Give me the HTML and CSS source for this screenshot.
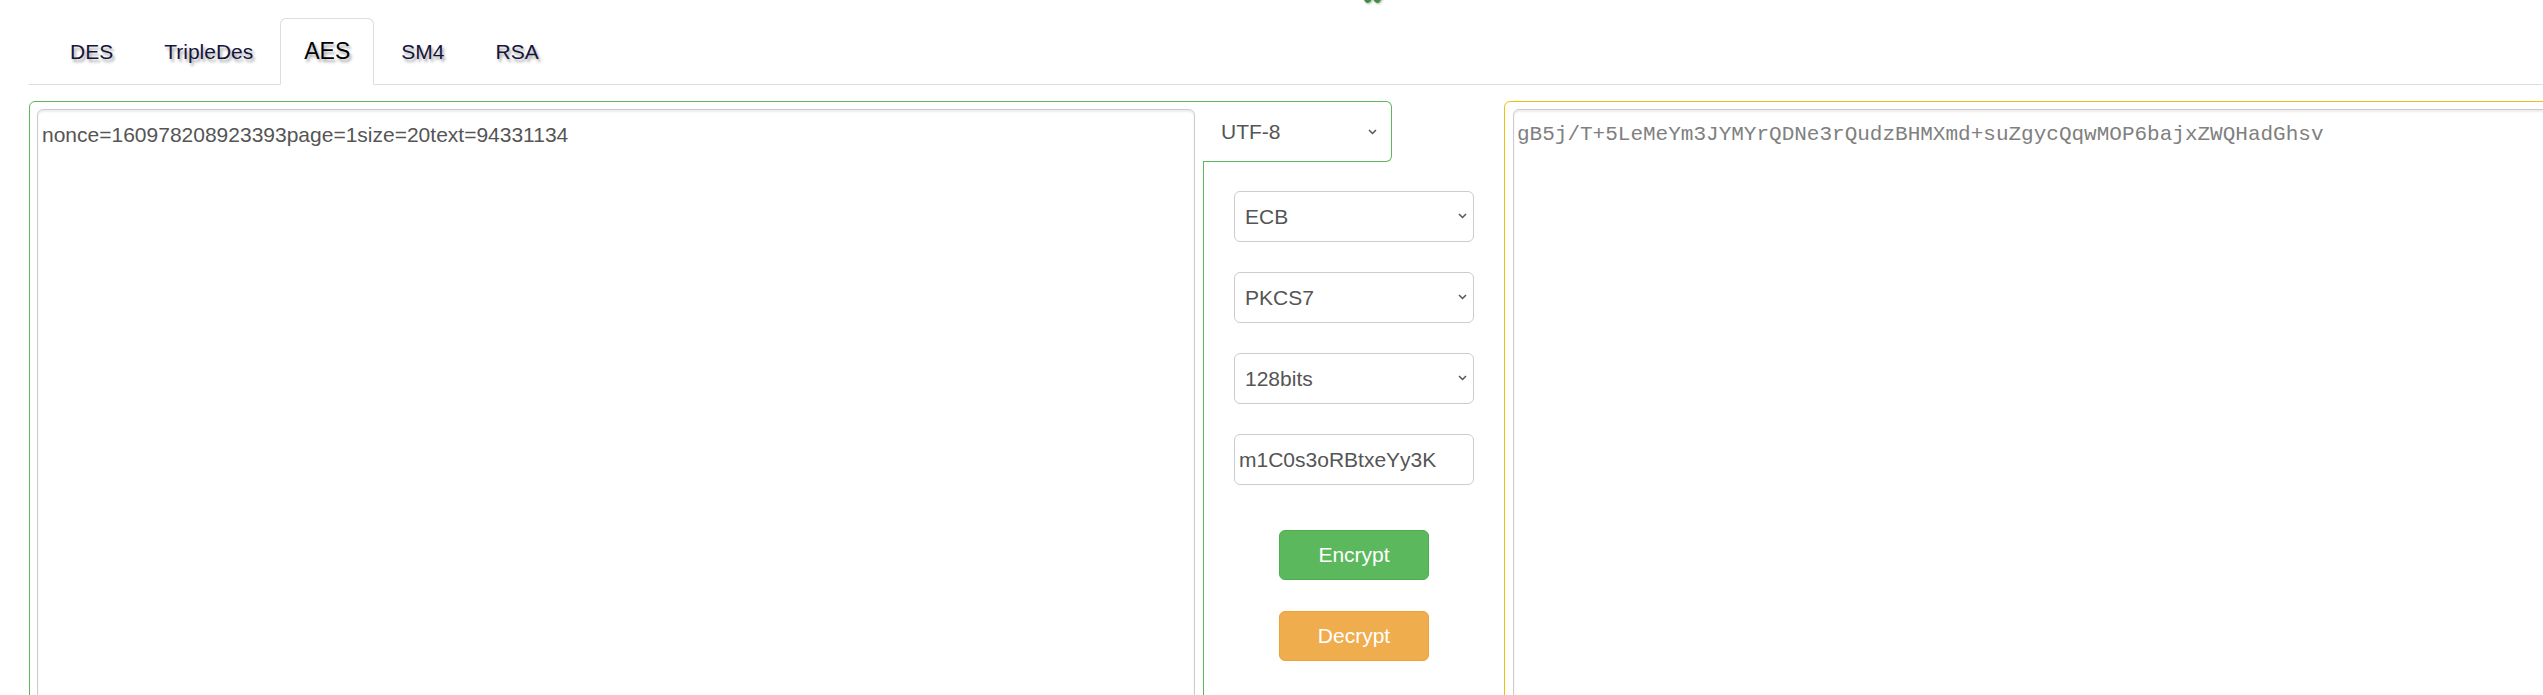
FILE: index.html
```html
<!DOCTYPE html>
<html lang="en">
<head>
  <meta charset="UTF-8">
  <meta name="viewport" content="width=device-width, initial-scale=1.0">
  <title>Crypto Tool</title>
  <link rel="stylesheet" href="styles.css">
</head>
<body>
  <!-- logo cut off at top -->
  <svg class="top-logo" width="24" height="14" viewBox="0 0 24 14">
    <rect x="3" y="-6" width="7" height="14" rx="3" fill="#3f8f3f" transform="rotate(-30 6 4)" />
    <rect x="13" y="-6" width="7" height="14" rx="3" fill="#3f8f3f" transform="rotate(30 17 4)" />
  </svg>

  <!-- Tabs -->
  <ul class="nav-tabs">
    <li><a href="#">DES</a></li>
    <li><a href="#">TripleDes</a></li>
    <li class="active"><a href="#">AES</a></li>
    <li><a href="#">SM4</a></li>
    <li><a href="#">RSA</a></li>
  </ul>

  <div class="main">
    <!-- Plain text -->
    <div class="panel panel-green">
      <textarea class="text-box">nonce=160978208923393page=1size=20text=94331134</textarea>
    </div>

    <!-- Options -->
    <div class="options">
      <div class="charset">
        <span>UTF-8</span>
        <svg class="chevron" width="9" height="6" viewBox="0 0 9 6"><path d="M1 1l3.5 3.5L8 1" fill="none" stroke="#555" stroke-width="1.5" /></svg>
      </div>

      <div class="select-wrap">
        <select class="form-control"><option>ECB</option></select>
        <svg class="chevron" width="9" height="6" viewBox="0 0 9 6"><path d="M1 1l3.5 3.5L8 1" fill="none" stroke="#555" stroke-width="1.5" /></svg>
      </div>
      <div class="select-wrap">
        <select class="form-control"><option>PKCS7</option></select>
        <svg class="chevron" width="9" height="6" viewBox="0 0 9 6"><path d="M1 1l3.5 3.5L8 1" fill="none" stroke="#555" stroke-width="1.5" /></svg>
      </div>
      <div class="select-wrap">
        <select class="form-control"><option>128bits</option></select>
        <svg class="chevron" width="9" height="6" viewBox="0 0 9 6"><path d="M1 1l3.5 3.5L8 1" fill="none" stroke="#555" stroke-width="1.5" /></svg>
      </div>
      <input type="text" class="form-control key-input" value="m1C0s3oRBtxeYy3K">

      <button class="btn btn-success">Encrypt</button>
      <button class="btn btn-warning">Decrypt</button>
    </div>

    <!-- Cipher text -->
    <div class="panel panel-yellow">
      <textarea class="text-box mono">gB5j/T+5LeMeYm3JYMYrQDNe3rQudzBHMXmd+suZgycQqwMOP6bajxZWQHadGhsv</textarea>
    </div>
  </div>
</body>
</html>
```

FILE: styles.css
```css
html, body {
  overflow: hidden;
}

body {
  font-family: 'Liberation Sans', Arial, sans-serif;
  font-size: 21px;
  color: #555;
  margin: 0;
  padding: 0;
  position: relative;
}

.top-logo {
  position: absolute;
  top: -5px;
  left: 1361px;
  filter: drop-shadow(1px 1px 1px rgba(0, 0, 0, 0.3));
}

/* Tabs */
.nav-tabs {
  list-style: none;
  display: flex;
  margin: 18px 0 0 29px;
  padding: 0 0 0 17px;
  border-bottom: 1px solid #ddd;
}

.nav-tabs li {
  margin-right: 3px;
  margin-bottom: -1px;
}

.nav-tabs a {
  display: block;
  height: 65px;
  line-height: 65px;
  padding: 0 23px;
  border: 1px solid transparent;
  border-radius: 6px 6px 0 0;
  color: #15153c;
  text-decoration: none;
  text-shadow: 2px 3px 3px rgba(0, 0, 0, 0.35);
}

.nav-tabs li.active a {
  background-color: #fff;
  border-color: #ddd;
  border-bottom-color: transparent;
  color: #000;
  font-size: 23px;
}

/* Main row */
.main {
  display: flex;
  height: 720px;
  margin: 16px -40px 0 29px;
}

.panel {
  border: 1px solid;
  border-radius: 6px 0 0 0;
  padding: 7px 8px 0 7px;
  display: flex;
}

.panel-green {
  width: 1158px;
  border-color: #5cb85c;
}

.panel-yellow {
  flex: 1;
  border-color: #efc012;
  padding-left: 8px;
}

.text-box {
  flex: 1;
  border: 1px solid #ccc;
  border-radius: 6px;
  box-shadow: inset 0 2px 2px rgba(0, 0, 0, 0.08);
  padding: 10px 4px;
  font-family: 'Liberation Sans', Arial, sans-serif;
  font-size: 21px;
  line-height: 30px;
  color: #555;
  resize: none;
  outline: none;
}

.text-box.mono {
  font-family: 'Liberation Mono', 'Courier New', monospace;
  color: #808080;
  padding-left: 3px;
}

/* Options column */
.options {
  width: 300px;
  display: flex;
  flex-direction: column;
  align-items: center;
}

.charset {
  align-self: flex-start;
  box-sizing: border-box;
  width: 189px;
  height: 61px;
  margin-left: -1px;
  padding: 0 14px 0 18px;
  border: 1px solid #5cb85c;
  border-left: none;
  border-radius: 0 6px 6px 0;
  background-color: #fff;
  display: flex;
  justify-content: space-between;
  align-items: center;
  font-size: 21px;
}

.select-wrap {
  position: relative;
  margin-top: 30px;
}

.charset + .select-wrap {
  margin-top: 29px;
}

.select-wrap .chevron {
  position: absolute;
  right: 7px;
  top: 22px;
}

.form-control {
  box-sizing: border-box;
  width: 240px;
  height: 51px;
  border: 1px solid #ccc;
  border-radius: 6px;
  background-color: #fff;
  font-family: 'Liberation Sans', Arial, sans-serif;
  font-size: 21px;
  color: #555;
  outline: none;
}

select.form-control {
  -webkit-appearance: none;
  appearance: none;
  padding: 0 20px 0 10px;
}

.key-input {
  margin-top: 30px;
  padding: 0 4px;
}

.btn {
  width: 150px;
  height: 50px;
  border: 1px solid;
  border-radius: 6px;
  color: #fff;
  font-family: 'Liberation Sans', Arial, sans-serif;
  font-size: 21px;
  cursor: pointer;
}

.btn-success {
  margin-top: 45px;
  background-color: #5cb85c;
  border-color: #4cae4c;
}

.btn-warning {
  margin-top: 31px;
  background-color: #f0ad4e;
  border-color: #eea236;
}
```
